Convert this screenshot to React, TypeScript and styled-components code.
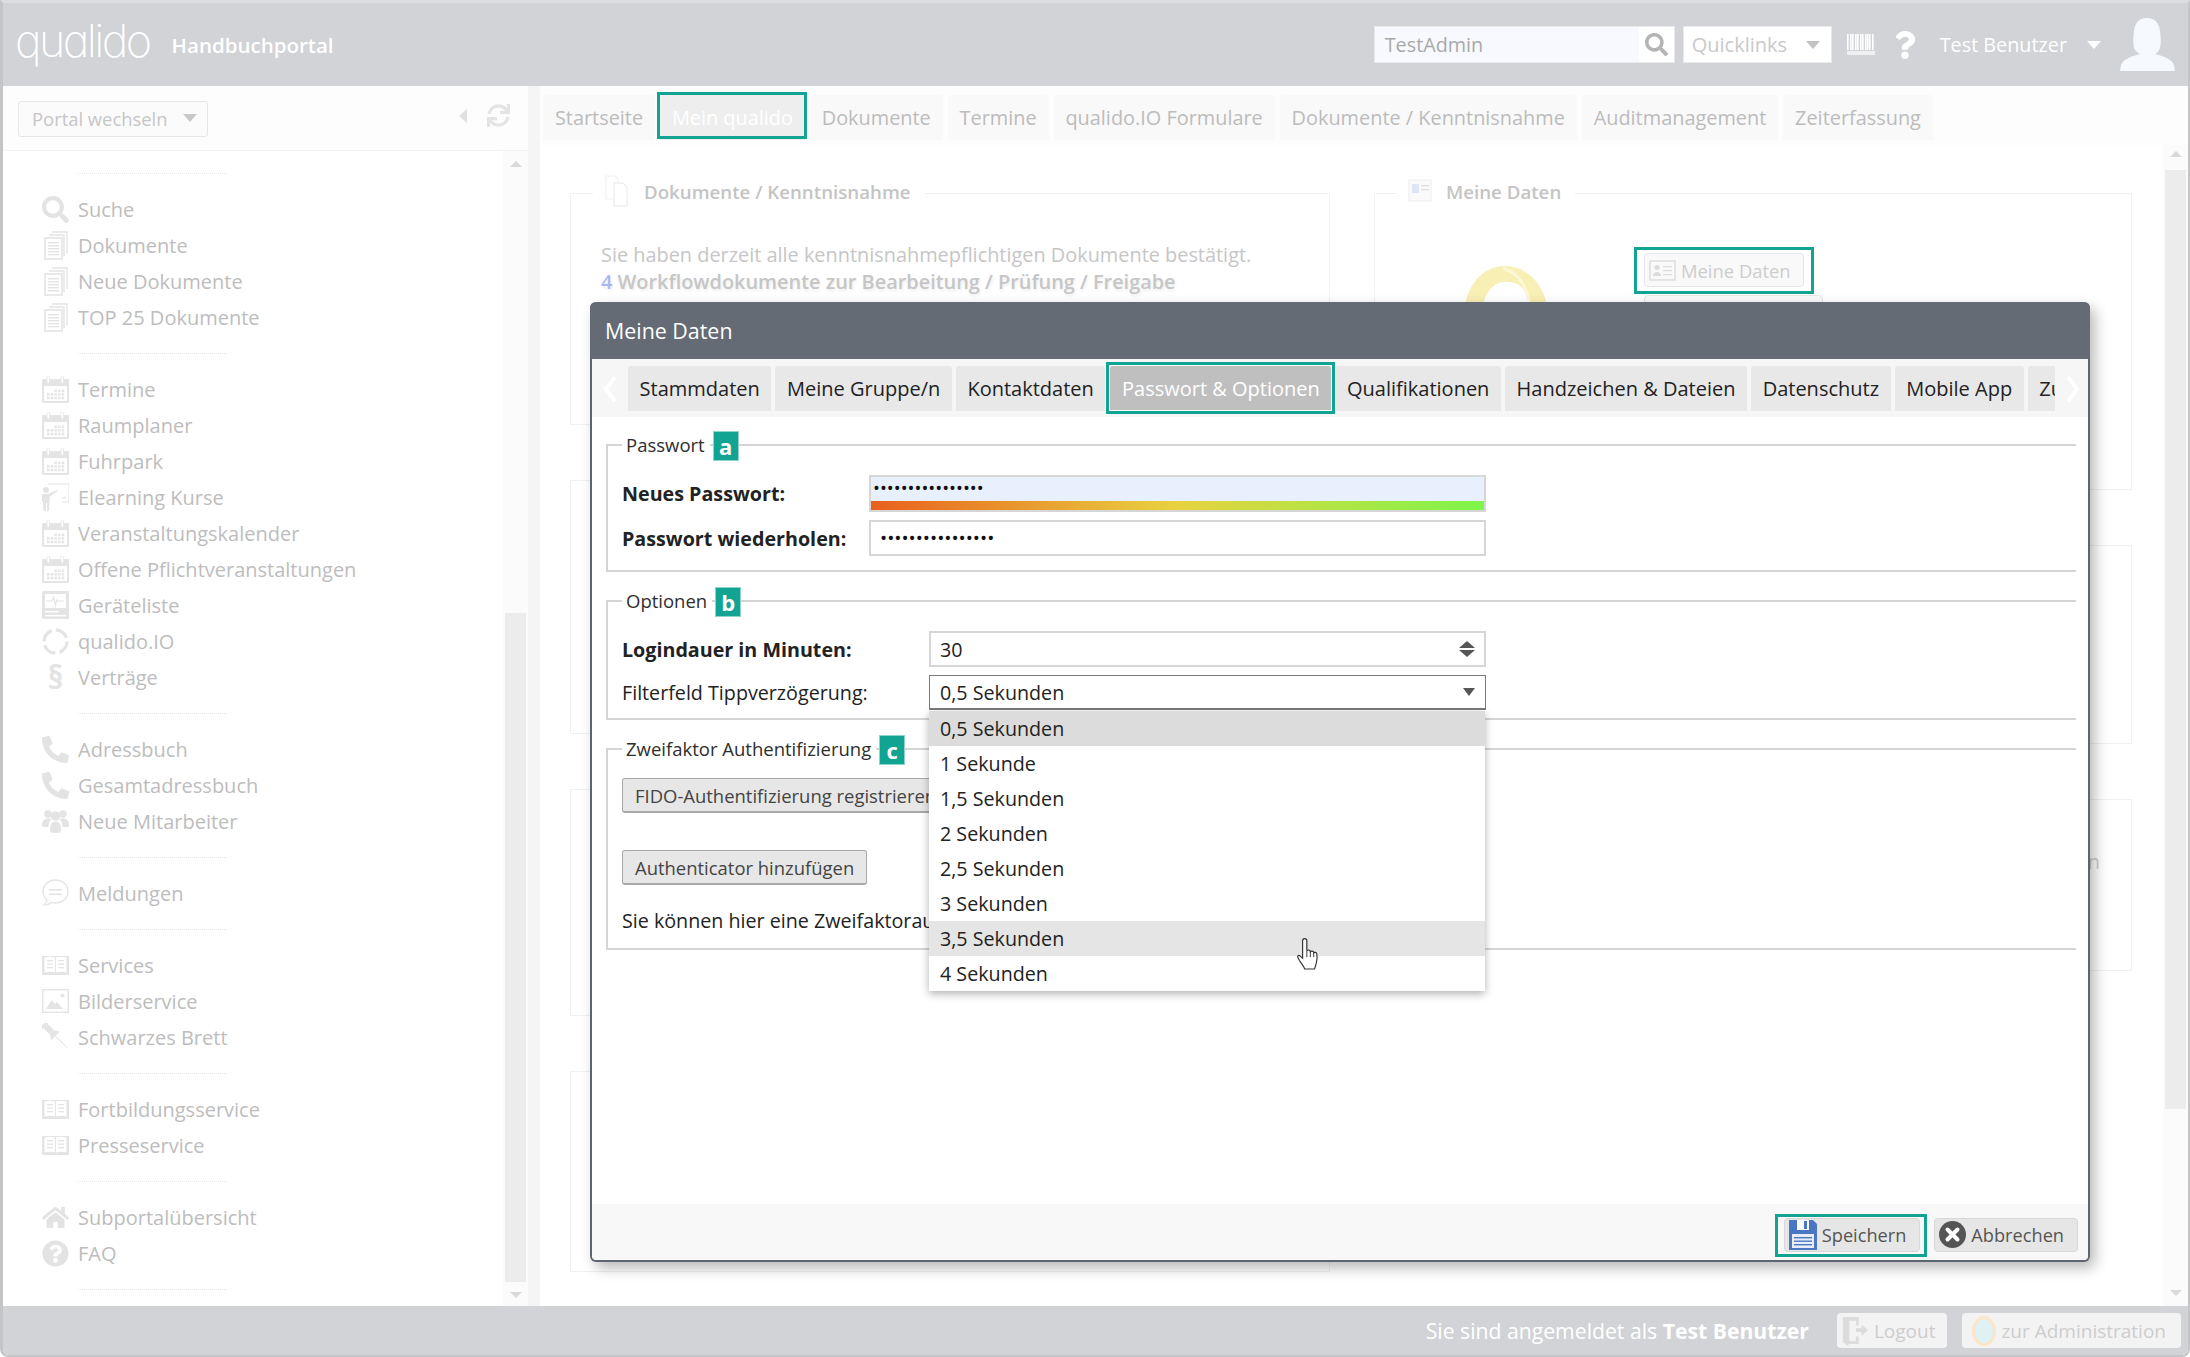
import React from 'react';
import styled, { createGlobalStyle } from 'styled-components';
import { FaSearch, FaPhoneAlt, FaHome, FaQuestionCircle, FaSync, FaQuestion } from 'react-icons/fa';

const TEAL = '#11a493';

const Global = createGlobalStyle`
  html, body {
    margin: 0;
    padding: 0;
    height: 100%;
    overflow: hidden;
    background: #fff;
  }
  * {
    box-sizing: border-box;
  }
  body {
    font-family: 'Open Sans', 'Liberation Sans', sans-serif;
    font-size: 19.7px;
    color: #333;
  }
`;

const Shell = styled.div`
  position: relative;
  display: flex;
  flex-direction: column;
  height: 100vh;
  border: solid #c4c5c7;
  border-width: 3px 2px 2px 3px;
  border-top-color: #dcdde0;
  border-radius: 0 0 8px 8px;
  overflow: hidden;
`;

/* header */
const Header = styled.header`
  display: flex;
  align-items: center;
  flex: 0 0 83px;
  padding: 0 13px 0 12px;
  background: #d1d3d6;
`;

const Logo = styled.span`
  font-family: Inter, 'Open Sans', sans-serif;
  font-feature-settings: 'cv11' 1;
  font-weight: 200;
  font-size: 45px;
  line-height: 1;
  letter-spacing: -2.6px;
  color: #fff;
  margin-top: -8px;
`;

const PortalName = styled.span`
  margin-left: 22px;
  font-size: 20.5px;
  font-weight: 600;
  color: #fff;
`;

const HeaderTools = styled.div`
  display: flex;
  align-items: center;
  margin-left: auto;
`;

const SearchBox = styled.div`
  display: flex;
  width: 301px;
  height: 37px;
  background: #fff;
  border: 1px solid #e8e9eb;
`;

const SearchText = styled.div`
  flex: 1;
  padding-left: 10px;
  line-height: 35px;
  font-size: 19.8px;
  color: #a9a9a9;
  background: #f7f9fe;
`;

const SearchIcon = styled.div`
  display: flex;
  flex: 0 0 35px;
  align-items: center;
  justify-content: center;
  color: #b4b4b4;
  font-size: 23px;
`;

const QuickLinks = styled.div`
  display: flex;
  align-items: center;
  justify-content: space-between;
  width: 149px;
  height: 37px;
  margin-left: 8px;
  padding: 0 11px 0 8px;
  background: #fff;
  border: 1px solid #e8e9eb;
  font-size: 20px;
  color: #c9c9c9;
`;

const Caret = styled.span<{ $color: string; $w?: number }>`
  display: inline-block;
  flex: none;
  width: 0;
  height: 0;
  border-style: solid;
  border-width: ${(p) => ((p.$w || 14) * 0.62).toFixed(1)}px ${(p) => (p.$w || 14) / 2}px 0;
  border-color: ${(p) => p.$color} transparent transparent;
`;

const BarcodeSlot = styled.span`
  display: flex;
  margin-left: 15px;
`;

const HelpMark = styled.div`
  display: flex;
  margin: 0 21px 0 16px;
  font-size: 28px;
  color: #fff;
`;

const UserName = styled.span`
  font-size: 19.8px;
  font-weight: 500;
  color: #fff;
  margin-right: 20px;
`;

const AvatarSlot = styled.div`
  display: flex;
  margin-left: 19px;
`;

/* body */
const Body = styled.div`
  display: flex;
  flex: 1;
  min-height: 0;
`;

const Sidebar = styled.aside`
  display: flex;
  flex-direction: column;
  flex: 0 0 525px;
  background: #fff;
`;

const SideTop = styled.div`
  display: flex;
  align-items: flex-start;
  flex: 0 0 65px;
  padding: 15px 18px 0 15px;
  background: #fdfdfd;
  border-bottom: 1px solid #f2f2f2;
`;

const PortalSwitch = styled.div`
  display: flex;
  align-items: center;
  justify-content: space-between;
  width: 190px;
  height: 36px;
  padding: 0 10px 2px 13px;
  background: #fbfbfb;
  border: 1px solid #e6e6e6;
  border-radius: 3px;
  font-size: 18.4px;
  color: #c6c6c6;
`;

const SideControls = styled.div`
  display: flex;
  align-items: center;
  gap: 20px;
  margin-left: auto;
  margin-top: 3px;
  color: #e4e4e4;
  font-size: 23px;
`;

const BackArrow = styled.span`
  width: 0;
  height: 0;
  border-style: solid;
  border-width: 7px 8px 7px 0;
  border-color: transparent #e0e0e0 transparent transparent;
`;

const SideScroll = styled.div`
  display: flex;
  flex: 1;
  min-height: 0;
`;

const Menu = styled.nav`
  flex: 1;
  padding: 22px 0 0 39px;
`;

const MenuDivider = styled.div`
  width: 149px;
  height: 1px;
  margin: 0 0 17px 36px;
  border-top: 1px dotted #e4e4e4;
`;

const MenuGroup = styled.div`
  margin-bottom: 18px;
`;

const MenuItem = styled.div`
  display: flex;
  align-items: center;
  height: 36px;
  font-size: 20px;
  color: #bdbdbd;
`;

const MenuIcon = styled.span`
  display: flex;
  align-items: center;
  justify-content: center;
  flex: 0 0 27px;
  height: 30px;
  margin-right: 9px;
  color: #e3e3e3;
  font-size: 27px;
`;

const Paragraph = styled.span`
  font-weight: 700;
  font-size: 32px;
  line-height: 1;
`;

const Track = styled.div<{ $pad: string }>`
  display: flex;
  flex-direction: column;
  flex: 0 0 25px;
  padding: ${(p) => p.$pad};
  background: #fbfbfb;
`;

const Thumb = styled.div<{ $height: number; $top: number }>`
  flex: 0 0 ${(p) => p.$height}px;
  margin: ${(p) => p.$top}px 2px 0;
  background: #ececec;
`;

const TrackArrow = styled.span<{ $down?: boolean }>`
  display: block;
  width: 0;
  height: 0;
  flex: none;
  margin: ${(p) => (p.$down ? 'auto' : '0')} auto 0;
  border-style: solid;
  border-color: transparent;
  border-width: ${(p) => (p.$down ? '6px 6px 0' : '0 6px 6px')};
  border-top-color: ${(p) => (p.$down ? '#d9d9d9' : 'transparent')};
  border-bottom-color: ${(p) => (p.$down ? 'transparent' : '#d9d9d9')};
`;

const Gutter = styled.div`
  flex: 0 0 12px;
  background: #f5f5f5;
`;

/* main */
const Main = styled.main`
  display: flex;
  flex-direction: column;
  flex: 1;
  min-width: 0;
`;

const MainTabs = styled.div`
  display: flex;
  gap: 5px;
  flex: 0 0 59px;
  padding: 9px 0 5px 3px;
  background: #fdfdfd;
`;

const MainTab = styled.div<{ $marked?: boolean }>`
  position: relative;
  height: 45px;
  padding: 0 11.9px;
  line-height: 46px;
  font-size: 19.9px;
  border-radius: 3px 3px 0 0;
  color: ${(p) => (p.$marked ? '#fff' : '#bcbcbc')};
  background: ${(p) => (p.$marked ? '#eeeeee' : '#f9f9f9')};
  ${(p) =>
    p.$marked &&
    `
    &::after {
      content: '';
      position: absolute;
      inset: -3px -2.5px 1px;
      border: 3px solid ${TEAL};
    }
  `}
`;

const MainRow = styled.div`
  display: flex;
  flex: 1;
  min-height: 0;
`;

const Content = styled.div`
  display: grid;
  grid-template-columns: 760px 758px;
  column-gap: 44px;
  flex: 1;
  padding: 48px 0 0 30px;
`;

const Column = styled.div<{ $gap: number }>`
  display: flex;
  flex-direction: column;
  gap: ${(p) => p.$gap}px;
`;

const Panel = styled.section<{ $height: number }>`
  height: ${(p) => p.$height}px;
  border: 1px solid #f1f1f1;
`;

const PanelLegend = styled.div`
  display: flex;
  align-items: center;
  gap: 14px;
  width: fit-content;
  height: 30px;
  margin: -18px 0 0 22px;
  padding: 0 14px 0 11px;
  background: #fff;
  font-size: 18.7px;
  font-weight: 600;
  color: #c4c4c4;
`;

const PanelText = styled.div`
  margin: 36px 0 0 30px;
  font-size: 19.9px;
  line-height: 26.5px;
  color: #c6c6c6;
`;

const StrongLine = styled.div`
  font-weight: 600;
  color: #c6c6c6;
  text-shadow: 1px 2px 3px rgba(0, 0, 0, 0.08);
`;

const BlueNumber = styled.span`
  color: #a9b9f4;
`;

const ProfileRow = styled.div`
  display: flex;
  margin: 47px 0 0 88px;
`;

const Portrait = styled.div`
  flex: 0 0 181px;
  padding-top: 13px;
`;

const ProfileButtons = styled.div`
  display: flex;
  flex-direction: column;
  align-items: flex-start;
  gap: 8px;
`;

const ProfileButton = styled.div<{ $marked?: boolean }>`
  position: relative;
  display: flex;
  align-items: center;
  gap: 5px;
  height: 34px;
  padding: 0 12px 0 4px;
  background: #f9f9f9;
  border: 1px solid #e6e6e6;
  border-radius: 4px;
  font-size: 18.4px;
  color: #cdcdcd;
  ${(p) =>
    p.$marked &&
    `
    &::after {
      content: '';
      position: absolute;
      inset: -7px -11px -8px -11px;
      border: 3px solid ${TEAL};
    }
  `}
`;

const PeekText = styled.div`
  margin: 48px 31px 0 0;
  text-align: right;
  font-size: 19.9px;
  color: #d0d0d0;
`;

/* modal */
const Modal = styled.div`
  position: absolute;
  left: 587px;
  top: 299px;
  z-index: 10;
  display: flex;
  flex-direction: column;
  width: 1500px;
  height: 960px;
  background: #fff;
  border: 2px solid #5c6570;
  border-top: 0;
  border-radius: 6px;
  box-shadow: 5px 6px 14px rgba(0, 0, 0, 0.28);
`;

const ModalTitle = styled.div`
  flex: 0 0 57px;
  padding-left: 15px;
  line-height: 57px;
  border-radius: 6px 6px 0 0;
  margin: 0 -2px;
  background: #656b74;
  font-size: 21.4px;
  color: #fff;
`;

const ModalTabs = styled.div`
  display: flex;
  align-items: flex-start;
  flex: 0 0 57px;
  padding-top: 7px;
  background: #f6f6f6;
`;

const ChevronSlot = styled.div`
  display: flex;
  align-items: center;
  justify-content: center;
  flex: 0 0 36px;
  height: 45px;
`;

const TabStrip = styled.div`
  display: flex;
  gap: 4px;
  flex: 0 0 1427px;
  padding: 6px 6px 6px 0;
  margin-top: -6px;
  overflow: hidden;
`;

const ModalTab = styled.div<{ $active?: boolean }>`
  position: relative;
  flex: none;
  height: 45px;
  padding: 0 11.6px;
  line-height: 46px;
  font-size: 20px;
  border-radius: 3px 3px 0 0;
  color: ${(p) => (p.$active ? '#fff' : '#222')};
  background: ${(p) => (p.$active ? '#bfbfbf' : '#e8e8e8')};
  ${(p) =>
    p.$active &&
    `
    margin-left: 1px;
    &::after {
      content: '';
      position: absolute;
      inset: -4px -4px -3px;
      border: 3px solid ${TEAL};
      box-shadow: inset 0 0 0 1px #fff;
    }
  `}
`;

const ModalBody = styled.div`
  display: flex;
  flex-direction: column;
  flex: 1;
  padding: 27px 12px 0 14px;
`;

const Section = styled.section<{ $gap: number; $pad: number }>`
  margin-bottom: 28px;
  padding: 0 14px ${(p) => p.$pad}px 14px;
  border: 2px solid #d5d5d5;
  border-right: 0;
  & > *:nth-child(2) {
    margin-top: ${(p) => p.$gap}px;
  }
`;

const Legend = styled.div`
  display: flex;
  align-items: center;
  height: 30px;
  margin: -15px 0 0 0;
`;

const LegendText = styled.span`
  padding: 0 5px 4px 4px;
  background: #fff;
  font-size: 18.5px;
  color: #2e2e2e;
`;

const Badge = styled.span`
  display: flex;
  align-items: center;
  justify-content: center;
  width: 26px;
  height: 30px;
  margin-left: 3px;
  background: ${TEAL};
  border: 1px solid #8fd5cb;
  font-size: 22px;
  font-weight: 700;
  color: #fff;
`;

const FieldRow = styled.div<{ $label: number }>`
  display: grid;
  grid-template-columns: ${(p) => p.$label}px ${(p) => 1486 - 622 - p.$label}px;
  align-items: center;
  margin-top: 8px;
`;

const FieldLabel = styled.label<{ $plain?: boolean }>`
  font-size: 19.7px;
  font-weight: ${(p) => (p.$plain ? 400 : 700)};
  color: #222;
`;

const StrengthField = styled.div`
  display: flex;
  flex-direction: column;
  height: 37px;
  background: #e9f0fd;
  border: 2px solid #d6d6d6;
`;

const StrengthInput = styled.input`
  flex: 1;
  min-height: 0;
  width: 100%;
  padding: 0 0 4px 2px;
  border: 0;
  outline: 0;
  background: transparent;
  font-family: inherit;
  font-size: 18.4px;
  color: #111;
`;

const StrengthBar = styled.div`
  flex: 0 0 9px;
  background: linear-gradient(90deg, #e9601f 0%, #e8d33f 50%, #7df54a 100%);
`;

const PlainInput = styled.input`
  display: block;
  width: 100%;
  height: 36px;
  padding: 0 9px;
  border: 2px solid #d6d6d6;
  outline: 0;
  background: #fff;
  font-family: inherit;
  font-size: 19px;
  color: #111;
`;

const NumberField = styled.div`
  display: flex;
  align-items: center;
  justify-content: space-between;
  height: 36px;
  padding: 0 9px 0 9px;
  border: 2px solid #d6d6d6;
  font-size: 19.7px;
  color: #222;
`;

const Spinner = styled.span`
  display: flex;
  flex-direction: column;
  gap: 2px;
`;

const SpinUp = styled.span`
  width: 0;
  height: 0;
  border-style: solid;
  border-width: 0 8px 7px;
  border-color: transparent transparent #555;
`;

const SpinDown = styled(SpinUp)`
  border-width: 7px 8px 0;
  border-color: #555 transparent transparent;
`;

const SelectWrap = styled.div`
  position: relative;
  z-index: 3;
`;

const SelectBox = styled(NumberField)`
  height: 35px;
  border: 2px solid #7b7b7b;
  border-width: 1px 1px 2px;
  padding: 0 10px;
`;

const DropList = styled.div`
  position: absolute;
  top: calc(100% + 1px);
  left: 0;
  right: 1px;
  background: #fff;
  box-shadow: 0 3px 8px rgba(0, 0, 0, 0.3);
`;

const DropItem = styled.div<{ $state?: 'selected' | 'hover' }>`
  height: 35px;
  padding-left: 11px;
  line-height: 35px;
  font-size: 19.7px;
  color: #222;
  background: ${(p) =>
    p.$state === 'selected' ? '#dcdcdc' : p.$state === 'hover' ? '#e5e5e5' : '#fff'};
`;

const Pointer = styled.span`
  position: absolute;
  left: 367px;
  top: 226px;
  display: flex;
`;

const GreyButton = styled.div<{ $top?: number }>`
  width: fit-content;
  height: 35px;
  margin-top: ${(p) => p.$top ?? 0}px;
  padding: 0 12px;
  line-height: 33px;
  white-space: nowrap;
  background: #e7e7e7;
  border: 1px solid #a9a9a9;
  border-bottom-width: 2px;
  border-radius: 3px;
  font-size: 18.45px;
  color: #444;
`;

const HintLine = styled.div`
  margin-top: 23px;
  height: 25px;
  line-height: 25px;
  font-size: 19.7px;
  color: #222;
  white-space: nowrap;
`;

const ModalFooter = styled.div`
  display: flex;
  align-items: center;
  justify-content: flex-end;
  gap: 14px;
  flex: 0 0 56px;
  padding: 5px 10px 0 0;
  background: #f8f8f8;
  border-radius: 0 0 5px 5px;
`;

const ActionButton = styled.div<{ $marked?: boolean }>`
  position: relative;
  display: flex;
  align-items: center;
  gap: 5px;
  height: 34px;
  padding: 0 13px 0 4px;
  background: #e6e6e6;
  border: 1px solid #d8d8d8;
  border-radius: 4px;
  font-size: 18.2px;
  color: #555;
  ${(p) =>
    p.$marked &&
    `
    &::after {
      content: '';
      position: absolute;
      inset: -5px -8px -6px -10px;
      border: 3px solid ${TEAL};
    }
  `}
`;

/* footer */
const Footer = styled.footer`
  display: flex;
  align-items: center;
  justify-content: flex-end;
  flex: 0 0 49px;
  padding: 0 7px 0 0;
  background: #d1d3d6;
`;

const LoginNote = styled.span`
  margin-right: 28px;
  font-size: 21.2px;
  color: #fff;
`;

const FooterButton = styled.div<{ $left: number; $right: number }>`
  display: flex;
  align-items: center;
  gap: 5px;
  height: 35px;
  margin-left: 15px;
  padding: 0 ${(p) => p.$right}px 0 ${(p) => p.$left}px;
  background: #f3f3f4;
  border-radius: 4px;
  font-size: 19px;
  color: #cdcdcd;
  &:first-of-type {
    margin-left: 0;
  }
`;

/* drawings */
const ICON = '#e4e4e4';

function DocsIcon() {
  return (
    <svg width="24" height="29" viewBox="0 0 24 29">
      <path d="M8 1h15v21M5 4h15v21" fill="none" stroke={ICON} strokeWidth="1.4" />
      <rect x="1" y="7" width="17" height="21" fill="#fff" stroke={ICON} strokeWidth="1.6" />
      {[11, 14, 17, 20, 23].map((y) => (
        <rect key={y} x="4" y={y} width="11" height="1.4" fill={ICON} />
      ))}
    </svg>
  );
}

function CalendarIcon() {
  const dots = [];
  for (let r = 0; r < 3; r++) {
    for (let c = 0; c < 5; c++) {
      if (r === 0 && c < 2) continue;
      dots.push(<rect key={`${r}-${c}`} x={5 + c * 3.7} y={13.5 + r * 3.6} width="2.5" height="2.5" fill={ICON} />);
    }
  }
  return (
    <svg width="27" height="27" viewBox="0 0 27 27">
      <rect x="0" y="3" width="27" height="24" rx="1" fill={ICON} />
      <rect x="2" y="10" width="23" height="15" fill="#fff" />
      <rect x="5" y="0" width="2.5" height="7" rx="1" fill="#fff" stroke={ICON} strokeWidth="0.8" />
      <rect x="19" y="0" width="2.5" height="7" rx="1" fill="#fff" stroke={ICON} strokeWidth="0.8" />
      {dots}
    </svg>
  );
}

function TeacherIcon() {
  return (
    <svg width="27" height="28" viewBox="0 0 27 28">
      <path d="M6 1h21v18H20" fill="none" stroke={ICON} strokeWidth="1.2" />
      <circle cx="4" cy="7" r="3" fill={ICON} />
      <path d="M0 11h6l9-4 .5 1-8 6v5l-.5 9H5v-8H4v8H1.5L1 19l-1-1z" fill={ICON} />
      <rect x="20" y="14" width="4" height="1.2" fill={ICON} />
    </svg>
  );
}

function DeviceIcon() {
  return (
    <svg width="27" height="28" viewBox="0 0 27 28">
      <rect width="27" height="28" rx="1" fill={ICON} />
      <rect x="3" y="3" width="21" height="14" fill="#fff" />
      <path d="M4 10h6l1.5-4 2 8 1.5-5 1 1h6" fill="none" stroke={ICON} strokeWidth="1.2" />
      <rect x="3" y="20" width="14" height="1.4" fill="#fff" />
      <rect x="3" y="24" width="21" height="1.4" fill="#fff" />
    </svg>
  );
}

function CycleIcon() {
  return (
    <svg width="27" height="29" viewBox="0 0 27 29">
      <circle cx="13.5" cy="14.5" r="11.5" fill="none" stroke={ICON} strokeWidth="3.4" strokeDasharray="14 4.06" />
    </svg>
  );
}

function PeopleIcon() {
  return (
    <svg width="27" height="24" viewBox="0 0 27 24">
      <circle cx="6" cy="5" r="3.8" fill={ICON} />
      <circle cx="21" cy="5" r="3.8" fill={ICON} />
      <path d="M0 16c0-4 2-6.500 6-6.500 1.500 0 2.500.3 3.400.9C7.500 12 6.500 14.500 6.500 18H2c-1.200 0-2-.8-2-2zM27 16c0-4-2-6.500-6-6.500-1.500 0-2.500.3-3.400.9 1.900 1.600 2.900 4.100 2.900 7.600H25c1.200 0 2-.8 2-2z" fill={ICON} />
      <circle cx="13.500" cy="7" r="4.800" fill={ICON} />
      <path d="M8 21c0-5 1.500-8.500 5.500-8.500S19 16 19 21c0 2-1.500 3-3 3h-5c-1.500 0-3-1-3-3z" fill={ICON} />
    </svg>
  );
}

function PinIcon() {
  return (
    <svg width="27" height="28" viewBox="0 0 27 28">
      <g transform="rotate(-45 13.500 13)">
        <rect x="8.500" y="-4" width="10" height="3" rx="1" fill={ICON} />
        <rect x="10.500" y="-1" width="6" height="9" fill={ICON} />
        <path d="M10.500 8h6l3 5h-12z" fill={ICON} />
        <rect x="13" y="13" width="1" height="17" fill={ICON} />
      </g>
    </svg>
  );
}

function ChatIcon() {
  return (
    <svg width="27" height="28" viewBox="0 0 27 28">
      <path d="M13.5 1C6.5 1 1 6 1 12.5c0 3.5 1.6 6.4 4 8.5-.3 2-1.4 4-3 5 3 0 5.500-1 7.500-2.600 1.300.4 2.600.6 4 .6 7 0 12.500-5 12.500-11.500S20.500 1 13.500 1z" fill="none" stroke={ICON} strokeWidth="1.3" />
      <rect x="7" y="10" width="13" height="1.6" fill={ICON} />
      <rect x="7" y="14.500" width="13" height="1.6" fill={ICON} />
    </svg>
  );
}

function BookIcon() {
  return (
    <svg width="27" height="20" viewBox="0 0 27 20">
      <rect y="1" width="27" height="19" fill={ICON} />
      <path d="M2.500 2.500c4-1 8-1 10.500 0v15c-3-1-7-1-10.500 0zM24.500 2.500c-4-1-8-1-10.500 0v15c3-1 7-1 10.500 0z" fill="#fff" />
      {[5, 8.500, 12].map((y) => (
        <g key={y}>
          <rect x="5" y={y} width="6" height="1.300" fill={ICON} />
          <rect x="16" y={y} width="6" height="1.300" fill={ICON} />
        </g>
      ))}
    </svg>
  );
}

function PictureIcon() {
  return (
    <svg width="27" height="24" viewBox="0 0 27 24">
      <rect x="0.700" y="0.700" width="25.600" height="22.600" fill="none" stroke={ICON} strokeWidth="1.400" />
      <path d="M4 20l6-9 3 4 2-2 6 7z" fill={ICON} />
      <circle cx="20.500" cy="6.500" r="2" fill={ICON} />
    </svg>
  );
}

function BarcodeIcon() {
  const bars = [0, 3, 5, 8, 10, 13, 15, 18, 20, 22, 25];
  return (
    <svg width="28" height="21" viewBox="0 0 28 21">
      {bars.map((x) => (
        <rect key={x} x={x} width="1.600" height="16" fill="#fff" />
      ))}
      <rect y="17" width="28" height="4" fill="#eef0f2" />
    </svg>
  );
}

function AvatarIcon() {
  return (
    <svg width="55" height="53" viewBox="0 0 55 53">
      <path
        d="M27 0c7 0 12 4 13 13 1 7 1 13 0 17-1 3-3 5-5 6 8 2 17 5 19 11l1 6H0l1-6c2-6 11-9 19-11-2-1-5-3-6-6-1-4-1-10 0-17C15 4 20 0 27 0z"
        fill="#f6f9fd"
      />
    </svg>
  );
}

function HairSketch() {
  return (
    <svg width="86" height="40" viewBox="0 0 86 40">
      <path d="M2 40C6 14 24 0 42 0c20 0 38 16 42 40H68C64 22 54 14 40 16 28 18 22 28 20 40z" fill="#f7efb4" />
      <path d="M40 2c12 4 22 14 26 32" fill="none" stroke="#fbf7d8" strokeWidth="3" />
    </svg>
  );
}

function CardIcon() {
  return (
    <svg width="27" height="27" viewBox="0 0 27 27">
      <rect x="1" y="4" width="25" height="19" fill="none" stroke="#dcdcdc" strokeWidth="1.400" />
      <circle cx="8" cy="10.500" r="2.600" fill="#dcdcdc" />
      <path d="M4 19c0-3 2-4 4-4s4 1 4 4z" fill="#dcdcdc" />
      <rect x="14" y="9" width="9" height="1.200" fill="#dcdcdc" />
      <rect x="14" y="13" width="9" height="1.200" fill="#dcdcdc" />
      <rect x="14" y="17" width="9" height="1.200" fill="#dcdcdc" />
    </svg>
  );
}

function LegendDocIcon() {
  return (
    <svg width="26" height="32" viewBox="0 0 26 32">
      <path d="M2 1h9l3 3v20H2z" fill="#fff" stroke="#f0f1f6" strokeWidth="1.200" />
      <path d="M10 8h9l4 4v19H10z" fill="#fff" stroke="#eeeff3" strokeWidth="1.400" />
    </svg>
  );
}

function LegendCardIcon() {
  return (
    <svg width="24" height="26" viewBox="0 0 24 26">
      <rect x="1" y="2" width="22" height="21" fill="#fafafa" stroke="#eeeeee" />
      <rect x="4" y="6" width="7" height="9" fill="#dce6f6" />
      <rect x="13" y="7" width="8" height="1.400" fill="#e0e0e0" />
      <rect x="13" y="11" width="8" height="1.400" fill="#e0e0e0" />
    </svg>
  );
}

function FloppyIcon() {
  return (
    <svg width="28" height="30" viewBox="0 0 28 30">
      <path d="M0 0h24l4 4v26H0z" fill="#4a77c4" />
      <rect x="8" y="0" width="12" height="10" fill="#fff" />
      <rect x="15" y="1" width="3" height="8" fill="#4a77c4" />
      <rect x="3" y="14" width="22" height="14" fill="#e7edf7" />
      {[17, 20.500, 24].map((y) => (
        <rect key={y} x="5" y={y} width="18" height="1.400" fill="#4a77c4" />
      ))}
    </svg>
  );
}

function CancelIcon() {
  return (
    <svg width="27" height="27" viewBox="0 0 27 27">
      <circle cx="13.500" cy="13.500" r="13.500" fill="#555" />
      <path d="M8.500 8.500l10 10M18.500 8.500l-10 10" stroke="#fff" strokeWidth="4" strokeLinecap="round" />
    </svg>
  );
}

function LogoutIcon() {
  return (
    <svg width="28" height="32" viewBox="0 0 30 32">
      <path d="M2 1h17v9h-3V5H9l0 22h7v-5h3v8H8v2L2 28z" fill="#dcdcdc" />
      <path d="M16 13h6V9l7 6-7 6v-4h-6z" fill="#dcdcdc" />
    </svg>
  );
}

function AdminIcon() {
  return (
    <svg width="24" height="32" viewBox="0 0 24 32">
      <ellipse cx="12" cy="16" rx="10.500" ry="13.500" fill="#dff1f3" stroke="#fbe6c8" strokeWidth="3" />
    </svg>
  );
}

function HandCursor() {
  return (
    <svg width="27" height="35" viewBox="0 0 25 33">
      <path
        d="M8 1.500c1.200 0 2 .8 2 2V13c.5-1 2.500-1 3 0l.3 1c.5-1 2.500-1 3 0l.2 1c.6-.8 2.500-.6 2.800.7.400 2 .500 5-.2 8-.4 2-1.200 4-1.800 6.500H8c-1-3-3-5-5-8l-1.500-3c-.6-1.200.6-2.400 1.800-1.600L6 20V3.500c0-1.200.8-2 2-2z"
        fill="#fff"
        stroke="#333"
        strokeWidth="1.100"
      />
      <path d="M10 13v6M13.300 14v5M16.500 15v4" stroke="#333" strokeWidth="0.900" fill="none" />
    </svg>
  );
}

function SmallChevron({ flip }: { flip?: boolean }) {
  return (
    <svg width="14" height="28" viewBox="0 0 14 28" transform={flip ? 'scale(-1 1)' : undefined}>
      <path d="M12 2L3 14l9 12" fill="none" stroke="#fff" strokeWidth="4" />
    </svg>
  );
}

type Item = { label: string; icon: React.ReactNode };

const menu: Item[][] = [
  [
    { label: 'Suche', icon: <FaSearch /> },
    { label: 'Dokumente', icon: <DocsIcon /> },
    { label: 'Neue Dokumente', icon: <DocsIcon /> },
    { label: 'TOP 25 Dokumente', icon: <DocsIcon /> },
  ],
  [
    { label: 'Termine', icon: <CalendarIcon /> },
    { label: 'Raumplaner', icon: <CalendarIcon /> },
    { label: 'Fuhrpark', icon: <CalendarIcon /> },
    { label: 'Elearning Kurse', icon: <TeacherIcon /> },
    { label: 'Veranstaltungskalender', icon: <CalendarIcon /> },
    { label: 'Offene Pflichtveranstaltungen', icon: <CalendarIcon /> },
    { label: 'Geräteliste', icon: <DeviceIcon /> },
    { label: 'qualido.IO', icon: <CycleIcon /> },
    { label: 'Verträge', icon: <Paragraph>§</Paragraph> },
  ],
  [
    { label: 'Adressbuch', icon: <FaPhoneAlt /> },
    { label: 'Gesamtadressbuch', icon: <FaPhoneAlt /> },
    { label: 'Neue Mitarbeiter', icon: <PeopleIcon /> },
  ],
  [{ label: 'Meldungen', icon: <ChatIcon /> }],
  [
    { label: 'Services', icon: <BookIcon /> },
    { label: 'Bilderservice', icon: <PictureIcon /> },
    { label: 'Schwarzes Brett', icon: <PinIcon /> },
  ],
  [
    { label: 'Fortbildungsservice', icon: <BookIcon /> },
    { label: 'Presseservice', icon: <BookIcon /> },
  ],
  [
    { label: 'Subportalübersicht', icon: <FaHome /> },
    { label: 'FAQ', icon: <FaQuestionCircle /> },
  ],
];

const mainTabs = [
  'Startseite',
  'Mein qualido',
  'Dokumente',
  'Termine',
  'qualido.IO Formulare',
  'Dokumente / Kenntnisnahme',
  'Auditmanagement',
  'Zeiterfassung',
];

const modalTabs = [
  'Stammdaten',
  'Meine Gruppe/n',
  'Kontaktdaten',
  'Passwort & Optionen',
  'Qualifikationen',
  'Handzeichen & Dateien',
  'Datenschutz',
  'Mobile App',
  'Zugriffe',
];

const delays = [
  '0,5 Sekunden',
  '1 Sekunde',
  '1,5 Sekunden',
  '2 Sekunden',
  '2,5 Sekunden',
  '3 Sekunden',
  '3,5 Sekunden',
  '4 Sekunden',
];

export default function App() {
  return (
    <Shell>
      <Global />
      <Header>
        <Logo>qualido</Logo>
        <PortalName>Handbuchportal</PortalName>
        <HeaderTools>
          <SearchBox>
            <SearchText>TestAdmin</SearchText>
            <SearchIcon>
              <FaSearch />
            </SearchIcon>
          </SearchBox>
          <QuickLinks>
            Quicklinks
            <Caret $color="#c2c2c2" />
          </QuickLinks>
          <BarcodeSlot>
            <BarcodeIcon />
          </BarcodeSlot>
          <HelpMark>
            <FaQuestion />
          </HelpMark>
          <UserName>Test Benutzer</UserName>
          <Caret $color="#fff" />
          <AvatarSlot>
            <AvatarIcon />
          </AvatarSlot>
        </HeaderTools>
      </Header>

      <Body>
        <Sidebar>
          <SideTop>
            <PortalSwitch>
              Portal wechseln
              <Caret $color="#c8c8c8" />
            </PortalSwitch>
            <SideControls>
              <BackArrow />
              <FaSync />
            </SideControls>
          </SideTop>
          <SideScroll>
            <Menu>
              <MenuDivider />
              {menu.map((group, i) => (
                <React.Fragment key={i}>
                  <MenuGroup>
                    {group.map((item) => (
                      <MenuItem key={item.label}>
                        <MenuIcon>{item.icon}</MenuIcon>
                        {item.label}
                      </MenuItem>
                    ))}
                  </MenuGroup>
                  <MenuDivider />
                </React.Fragment>
              ))}
            </Menu>
            <Track $pad="10px 0 8px">
              <TrackArrow />
              <Thumb $height={669} $top={446} />
              <TrackArrow $down />
            </Track>
          </SideScroll>
        </Sidebar>
        <Gutter />
        <Main>
          <MainTabs>
            {mainTabs.map((t) => (
              <MainTab key={t} $marked={t === 'Mein qualido'}>
                {t}
              </MainTab>
            ))}
          </MainTabs>
          <MainRow>
            <Content>
              <Column $gap={55}>
                <Panel $height={232}>
                  <PanelLegend>
                    <LegendDocIcon />
                    Dokumente / Kenntnisnahme
                  </PanelLegend>
                  <PanelText>
                    Sie haben derzeit alle kenntnisnahmepflichtigen Dokumente bestätigt.
                    <StrongLine>
                      <BlueNumber>4</BlueNumber> Workflowdokumente zur Bearbeitung / Prüfung / Freigabe
                    </StrongLine>
                  </PanelText>
                </Panel>
                <Panel $height={254} />
                <Panel $height={227} />
                <Panel $height={201} />
              </Column>
              <Column $gap={55}>
                <Panel $height={297}>
                  <PanelLegend>
                    <LegendCardIcon />
                    Meine Daten
                  </PanelLegend>
                  <ProfileRow>
                    <Portrait>
                      <HairSketch />
                    </Portrait>
                    <ProfileButtons>
                      <ProfileButton $marked>
                        <CardIcon />
                        Meine Daten
                      </ProfileButton>
                      <ProfileButton>
                        <CardIcon />
                        Meine Termine
                      </ProfileButton>
                    </ProfileButtons>
                  </ProfileRow>
                </Panel>
                <Panel $height={199} />
                <Panel $height={172}>
                  <PeekText>Fortbildungen</PeekText>
                </Panel>
              </Column>
            </Content>
            <Track $pad="6px 0 10px">
              <TrackArrow />
              <Thumb $height={939} $top={13} />
              <TrackArrow $down />
            </Track>
          </MainRow>
        </Main>
      </Body>

      <Footer>
        <LoginNote>
          Sie sind angemeldet als <strong>Test Benutzer</strong>
        </LoginNote>
        <FooterButton $left={4} $right={12}>
          <LogoutIcon />
          Logout
        </FooterButton>
        <FooterButton $left={10} $right={15}>
          <AdminIcon />
          zur Administration
        </FooterButton>
      </Footer>

      <Modal>
        <ModalTitle>Meine Daten</ModalTitle>
        <ModalTabs>
          <ChevronSlot>
            <SmallChevron />
          </ChevronSlot>
          <TabStrip>
            {modalTabs.map((t) => (
              <ModalTab key={t} $active={t === 'Passwort & Optionen'}>
                {t}
              </ModalTab>
            ))}
          </TabStrip>
          <ChevronSlot>
            <SmallChevron flip />
          </ChevronSlot>
        </ModalTabs>
        <ModalBody>
          <Section $gap={14} $pad={14}>
            <Legend>
              <LegendText>Passwort</LegendText>
              <Badge>a</Badge>
            </Legend>
            <FieldRow $label={247}>
              <FieldLabel>Neues Passwort:</FieldLabel>
              <StrengthField>
                <StrengthInput type="password" defaultValue="testadmin1234567" readOnly />
                <StrengthBar />
              </StrengthField>
            </FieldRow>
            <FieldRow $label={247}>
              <FieldLabel>Passwort wiederholen:</FieldLabel>
              <PlainInput type="password" defaultValue="testadmin1234567" readOnly />
            </FieldRow>
          </Section>
          <Section $gap={14} $pad={8}>
            <Legend>
              <LegendText>Optionen</LegendText>
              <Badge>b</Badge>
            </Legend>
            <FieldRow $label={307}>
              <FieldLabel>Logindauer in Minuten:</FieldLabel>
              <NumberField>
                30
                <Spinner>
                  <SpinUp />
                  <SpinDown />
                </Spinner>
              </NumberField>
            </FieldRow>
            <FieldRow $label={307}>
              <FieldLabel $plain>Filterfeld Tippverzögerung:</FieldLabel>
              <SelectWrap>
                <SelectBox>
                  0,5 Sekunden
                  <Caret $color="#555" $w={13} />
                </SelectBox>
                <DropList>
                  {delays.map((d, i) => (
                    <DropItem key={d} $state={i === 0 ? 'selected' : i === 6 ? 'hover' : undefined}>
                      {d}
                    </DropItem>
                  ))}
                  <Pointer>
                    <HandCursor />
                  </Pointer>
                </DropList>
              </SelectWrap>
            </FieldRow>
          </Section>
          <Section $gap={13} $pad={15}>
            <Legend>
              <LegendText>Zweifaktor Authentifizierung</LegendText>
              <Badge>c</Badge>
            </Legend>
            <GreyButton>FIDO-Authentifizierung registrieren</GreyButton>
            <GreyButton $top={37}>Authenticator hinzufügen</GreyButton>
            <HintLine>Sie können hier eine Zweifaktorauthentifizierung</HintLine>
          </Section>
        </ModalBody>
        <ModalFooter>
          <ActionButton $marked>
            <FloppyIcon />
            Speichern
          </ActionButton>
          <ActionButton>
            <CancelIcon />
            Abbrechen
          </ActionButton>
        </ModalFooter>
      </Modal>
    </Shell>
  );
}
